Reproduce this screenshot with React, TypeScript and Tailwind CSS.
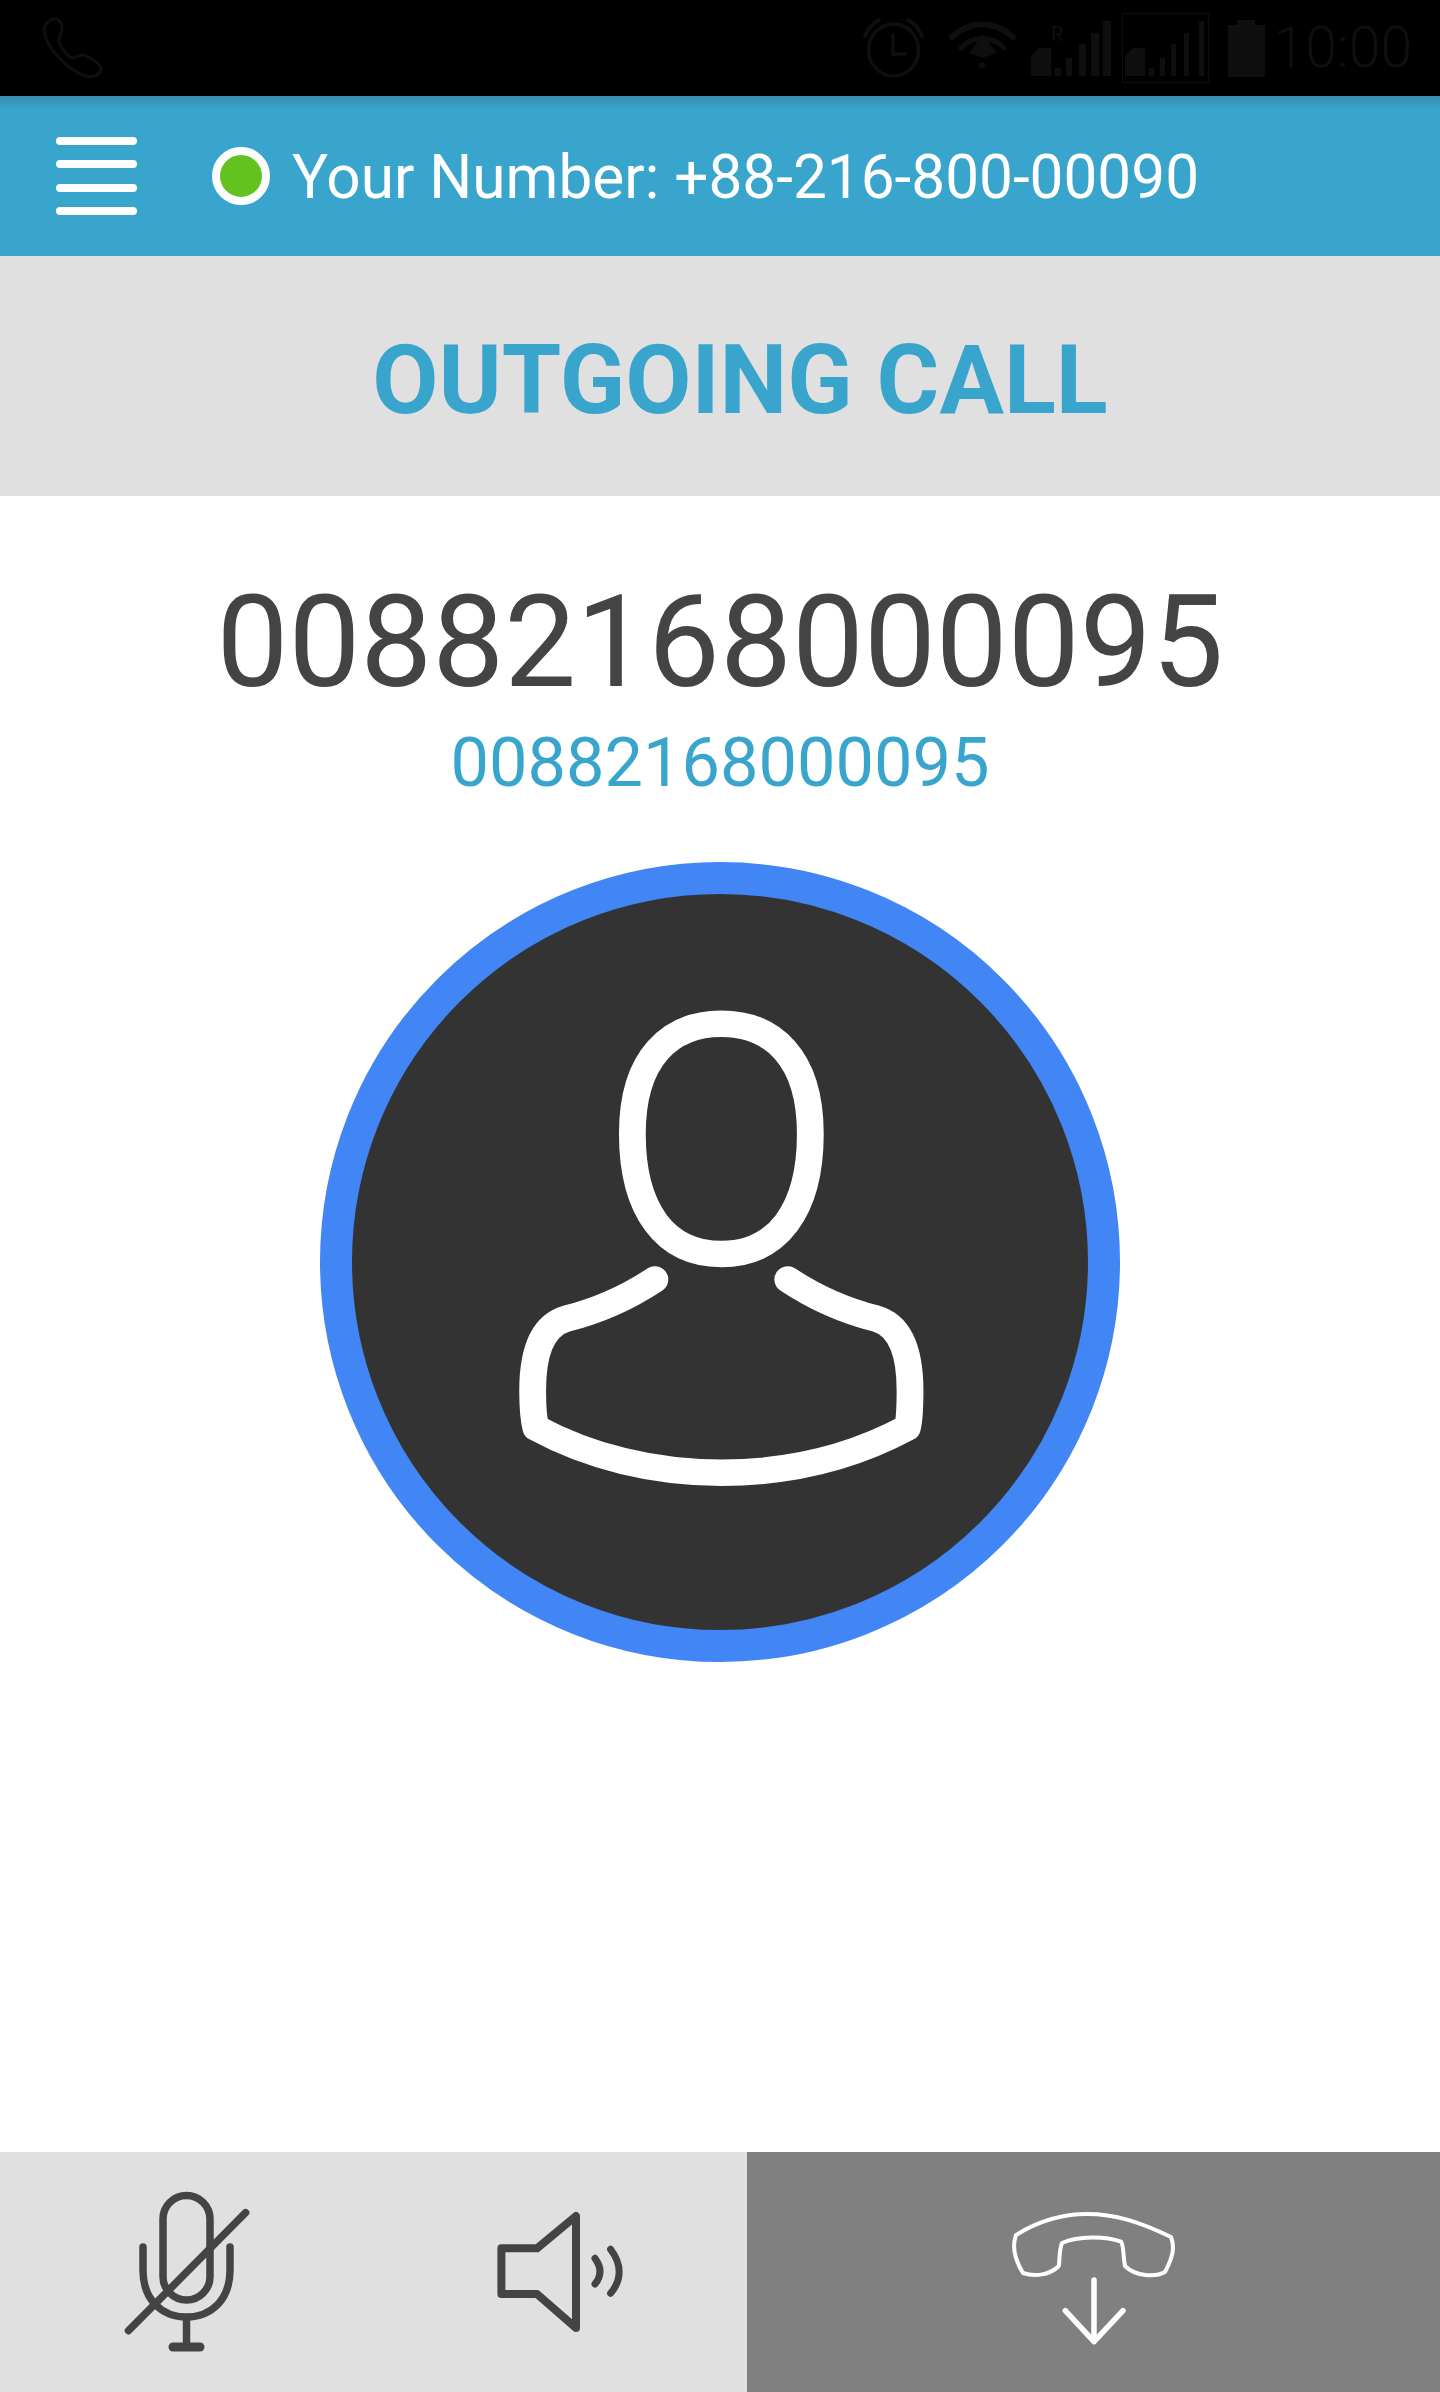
export default function App() {
  const faint = "#0f0f0f";
  return (
    <div className="w-[1440px] h-[2392px] flex flex-col bg-white font-['Roboto',sans-serif] overflow-hidden">
      {/* Status bar */}
      <div className="h-24 bg-black flex items-start shrink-0">
        <svg className="ml-[40px] mt-[16px] shrink-0" width="64" height="64" viewBox="40 16 64 64" fill="none" stroke={faint} strokeWidth="3" strokeLinejoin="round">
          <path d="M44 30 C44 24 50 19 55 19 C60 19 62 24 62 28 C62 34 58 36 59 42 C61 48 66 54 71 58 C75 59 79 54 84 55 C92 58 100 64 101 68 C101 74 94 77 90 77 C72 74 46 50 44 30 Z" />
        </svg>
        <div className="ml-auto flex items-start mr-[28px]">
          <svg className="mt-[17px] shrink-0" width="64" height="62" viewBox="864 17 64 62" fill="none" stroke={faint} strokeWidth="3.5" strokeLinecap="round">
            <ellipse cx="895.5" cy="50" rx="25" ry="26" />
            <path d="M895 35 V54 H907" />
            <path d="M867 36 C870 28 875 23 881 20 M924 36 C921 28 916 23 910 20" strokeWidth="4" />
          </svg>
          <svg className="ml-[23px] mt-[21px] shrink-0" width="68" height="50" viewBox="950 21 68 50" fill="none" stroke={faint} strokeWidth="6" strokeLinecap="round">
            <path d="M953 37 C972 20 995 20 1014 37" />
            <path d="M962 48 C975 35 992 35 1005 48" strokeWidth="5" />
            <path d="M984 34 L998 53 L984 58 L970 53 Z" fill={faint} stroke="none" />
            <circle cx="983" cy="65" r="3" fill={faint} stroke="none" />
          </svg>
          <svg className="ml-[14px] mt-[19px] shrink-0" width="82" height="59" viewBox="1032 19 82 59" fill={faint}>
            <text x="1052" y="41" fontSize="20" fontFamily="Roboto, sans-serif">R</text>
            <path d="M1032 56 L1040 48 H1052 V76 H1032 Z" />
            <rect x="1056" y="68" width="6" height="8" />
            <rect x="1067" y="58" width="6" height="18" />
            <rect x="1080" y="44" width="7" height="32" />
            <rect x="1092" y="33" width="8" height="43" />
            <rect x="1104" y="21" width="8" height="55" />
          </svg>
          <div className="ml-[9px] mt-[13px] w-[87px] h-[70px] border border-[#0f0f0f] shrink-0 flex items-end pb-[6px] pl-[2px]">
            <svg width="82" height="56" viewBox="1125 20 82 56" fill={faint}>
              <path d="M1125 56 L1133 48 H1145 V76 H1125 Z" />
              <rect x="1149" y="68" width="5" height="8" />
              <rect x="1160" y="58" width="5" height="18" />
              <rect x="1171" y="44" width="5" height="32" />
              <rect x="1184" y="33" width="5" height="43" />
              <rect x="1199" y="21" width="5" height="55" />
            </svg>
          </div>
          <svg className="ml-[19px] mt-[20px] shrink-0" width="37" height="57" viewBox="0 0 37 57" fill={faint}>
            <path d="M9 0 H27 V5 H37 V57 H0 V5 H9 Z" />
          </svg>
          <span className="ml-[9px] mt-[15px] text-[57px] leading-[66px] font-light text-[#0f0f0f]">10:00</span>
        </div>
      </div>

      {/* Header */}
      <div className="h-40 shrink-0 flex items-center bg-[linear-gradient(to_bottom,#358fb2_0px,#3aa5cc_14px)]">
        <div className="ml-14 w-[81px] flex flex-col gap-[15.5px] shrink-0">
          <div className="h-2 rounded-full bg-white" />
          <div className="h-2 rounded-full bg-white" />
          <div className="h-2 rounded-full bg-white" />
          <div className="h-2 rounded-full bg-white" />
        </div>
        <div className="ml-[75px] w-[58px] h-[58px] rounded-full bg-[#64c220] border-[8px] border-white shrink-0" />
        <span className="ml-[22px] pt-[4px] text-[60.3px] leading-none font-normal text-white whitespace-nowrap">Your Number: +88-216-800-00090</span>
      </div>

      {/* Title band */}
      <div className="h-60 shrink-0 bg-[#e0e0e0] flex items-center justify-center pl-10 pt-2">
        <span className="text-[96px] leading-none font-bold text-[#3aa5cc] whitespace-nowrap">OUTGOING CALL</span>
      </div>

      {/* Call info */}
      <div className="flex-1 flex flex-col items-center">
        <div className="mt-[82px] text-[128px] leading-[128px] text-[#444444] whitespace-nowrap">00882168000095</div>
        <div className="mt-[19px] text-[68.5px] leading-[76px] text-[#3aa5cc] whitespace-nowrap">00882168000095</div>
        <div className="mt-[61px] w-[800px] h-[800px] rounded-full border-[32px] border-[#4285f4] bg-[#333333] shrink-0">
          <svg width="736" height="736" viewBox="97 82 1373 1390" preserveAspectRatio="none" fill="none" stroke="#ffffff" strokeWidth="50" strokeLinecap="round" strokeLinejoin="round">
            <path d="M786 327 C880 327 952 390 952 535 C952 680 890 762 786 762 C682 762 620 680 620 535 C620 390 692 327 786 327 Z" />
            <path d="M662 810 C610 845 560 868 497 884 C450 898 434 950 434 1020 C434 1050 436 1075 440 1090 C540 1145 660 1175 786 1175 C912 1175 1032 1145 1133 1090 C1137 1075 1138 1050 1138 1020 C1138 950 1122 898 1075 884 C1012 868 962 845 910 810" />
          </svg>
        </div>
      </div>

      {/* Bottom bar */}
      <div className="h-60 shrink-0 flex">
        <div className="w-[747px] bg-[#e0e0e0] grid grid-cols-2">
          <div className="flex items-center justify-center">
            <svg width="126" height="164" viewBox="124 2190 126 164" fill="none" stroke="#444444" strokeWidth="7.5" strokeLinecap="round">
              <rect x="163" y="2195.5" width="47" height="104.5" rx="23.5" />
              <path d="M143 2247 V2270 C143 2300 162 2317 186.5 2317 C211 2317 230 2300 230 2270 V2247" />
              <path d="M186.5 2317 V2347" strokeLinecap="butt" />
              <path d="M173 2347 H200" strokeWidth="9" />
              <path d="M128.5 2330.7 L245.6 2212.7" strokeWidth="7.5" />
            </svg>
          </div>
          <div className="flex items-center justify-center">
            <svg width="127" height="124" viewBox="497 2210 127 124" fill="none" stroke="#444444" strokeWidth="8" strokeLinecap="round" strokeLinejoin="round">
              <path d="M501.4 2248.3 H537 L576 2216 V2328 L537 2294 H501.4 Z" />
              <path d="M595 2258.3 C601.5 2267 601.5 2276 595 2284" strokeWidth="7" />
              <path d="M610.6 2249.3 C622 2264 622 2280 610.6 2293.3" strokeWidth="7" />
            </svg>
          </div>
        </div>
        <div className="flex-1 bg-[#808080] flex items-center justify-center">
          <svg width="167" height="148" viewBox="1010 2198 167 148" fill="none" stroke="#ffffff" strokeLinecap="round" strokeLinejoin="round">
            <path strokeWidth="4" d="M1016 2235 C1040 2220 1062 2214 1087 2214 C1115 2214 1140 2222 1171 2237 C1175 2247 1173 2257 1165 2272 C1156 2277 1136 2277 1125 2266 C1123 2256 1124 2246 1121 2241.7 C1105 2236 1078 2236 1062 2243 C1059 2250 1060 2258 1058.8 2266 C1050 2275 1035 2277 1023 2273 C1015 2260 1012 2246 1016 2235 Z" />
            <path strokeWidth="5.5" d="M1094 2280 V2341 M1065.3 2310.7 L1094 2341.7 L1123 2310.7" />
          </svg>
        </div>
      </div>
    </div>
  );
}
